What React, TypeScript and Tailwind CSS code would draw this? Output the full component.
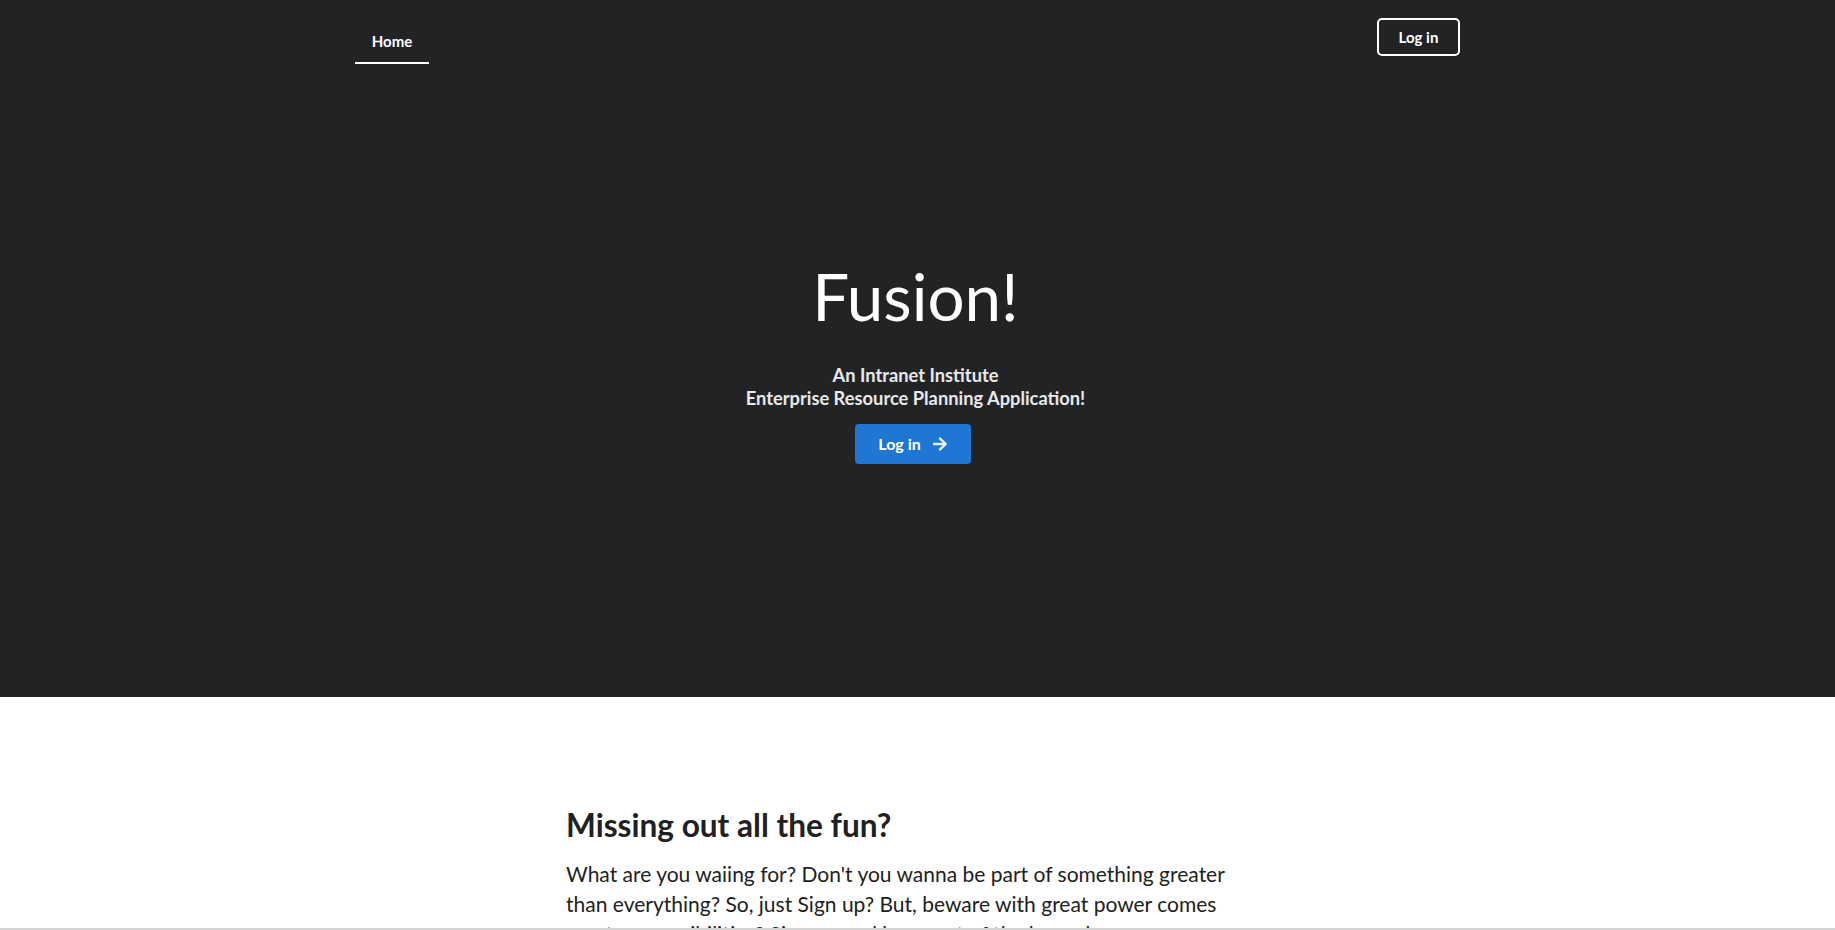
import { FaArrowRight } from "react-icons/fa";

export default function App() {
  return (
    <div className="min-h-screen bg-white font-['Lato','Noto_Sans',sans-serif]">
      {/* Masthead */}
      <section className="h-[697px] bg-[#222325] text-white">
        <nav className="w-[1127px] mx-auto flex items-start justify-between">
          <a className="ml-[1px] w-[74px] pt-[32px] pb-[12px] border-b-2 border-white text-center text-[15px] leading-[18px] font-bold text-white">
            Home
          </a>
          <button className="mt-[18px] mr-[21px] w-[83px] h-[38px] flex items-center justify-center border-2 border-white rounded-[5px] text-[15px] leading-[18px] font-bold text-white">
            Log in
          </button>
        </nav>

        <div className="mt-[193px] pr-[4px] flex flex-col items-center text-center">
          <h1 className="text-[65.5px] leading-[78px] font-normal text-white">Fusion!</h1>
          <h2 className="mt-[29px] text-[18.3px] leading-[23px] font-bold text-white/90">
            An Intranet Institute
            <br />
            Enterprise Resource Planning Application!
          </h2>
          <button className="mt-[14px] mr-[5px] h-[40px] w-[116px] flex items-center justify-center gap-[11px] rounded-[4px] bg-[#1e77d3] text-white text-[16px] leading-[20px] font-bold">
            <span>Log in</span>
            <FaArrowRight className="w-[16px] h-[16px] opacity-90" />
          </button>
        </div>
      </section>

      {/* Stripe */}
      <section className="pt-[108px] pb-[112px] pr-[3px]">
        <div className="w-[700px] mx-auto">
          <h3 className="text-[31.6px] leading-[40px] font-bold text-[#212121]">Missing out all the fun?</h3>
          <p className="mt-[14px] text-[21px] leading-[30px] text-[#212121]">
            What are you waiing for? Don't you wanna be part of something greater than everything? So, just Sign up? But, beware with great power comes great responsibilities? Sign up and be a part of the legend.
          </p>
        </div>
      </section>

      <div className="fixed bottom-0 left-0 right-0 h-[2px] bg-[#d4d4d5]" />
    </div>
  );
}
